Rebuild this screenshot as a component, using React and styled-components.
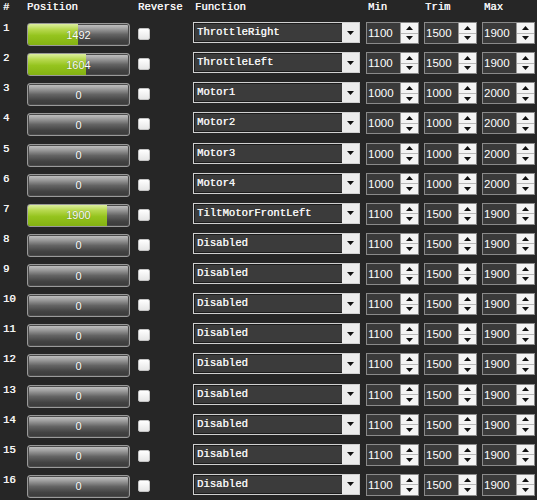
import React from 'react';
import styled, { createGlobalStyle } from 'styled-components';

const GlobalStyle = createGlobalStyle`
  html, body {
    margin: 0;
    padding: 0;
    background: #262626;
  }
  body {
    font-family: "Liberation Mono", monospace;
    color: #f2f2f2;
  }
`;

const COLS = '27px 111px 55px 173px 58px 58px 55px';

const Panel = styled.div`
  width: 537px;
  height: 500px;
  overflow: hidden;
  background: #262626;
`;

const HeaderRow = styled.div`
  display: grid;
  grid-template-columns: ${COLS};
  height: 22px;
  padding-top: 1px;
  box-sizing: border-box;
`;

const HeadCell = styled.div`
  font-family: "Liberation Mono", monospace;
  font-size: 10.6px;
  line-height: 13px;
  color: #f4f4f4;
  text-shadow: 0.3px 0 0 #f4f4f4;
  padding-left: ${p => p.$pad || 0}px;
`;

const Row = styled.div`
  display: grid;
  grid-template-columns: ${COLS};
  align-items: start;
  height: 30.13px;
`;

const RowNum = styled.div`
  font-family: "Liberation Mono", monospace;
  font-size: 10.6px;
  line-height: 12px;
  color: #f4f4f4;
  text-shadow: 0.3px 0 0 #f4f4f4;
  padding-left: 3px;
`;

const Bar = styled.div`
  position: relative;
  width: 103px;
  height: 23px;
  margin-top: 1px;
  box-sizing: border-box;
  border: 1px solid #9a9a9a;
  border-radius: 3px;
  overflow: hidden;
  background: linear-gradient(to bottom, #c8c8c8 0%, #a0a0a0 22%, #646464 50%, #434343 78%, #3a3a3a 100%);
  box-shadow: inset 0 0 0 1px #4a4a4a;
`;

const Fill = styled.div`
  position: absolute;
  left: 0;
  top: 0;
  bottom: 0;
  background: linear-gradient(to bottom, #dcee9f 0%, #b8d950 25%, #95c41e 55%, #84b212 100%);
`;

const BarLabel = styled.span`
  position: absolute;
  inset: 0;
  display: flex;
  align-items: center;
  justify-content: center;
  font-family: "Liberation Sans", Arial, sans-serif;
  font-size: 11px;
  color: #ffffff;
  text-shadow: 0 0 1px rgba(0, 0, 0, 0.5);
`;

const Check = styled.div`
  width: 12px;
  height: 12px;
  margin-top: 6px;
  border-radius: 2px;
  background: linear-gradient(to bottom, #ffffff, #e6e6e6);
  border: 1px solid #c4c4c4;
  box-sizing: border-box;
`;

const Select = styled.div`
  display: flex;
  width: 167px;
  height: 21px;
  box-sizing: border-box;
  border: 1px solid #d0d0d0;
  background: #3b3b3b;
  box-shadow: inset 0 0 0 1px #1c1c1c;
`;

const SelectText = styled.div`
  flex: 1;
  font-family: "Liberation Mono", monospace;
  font-size: 10.6px;
  line-height: 19px;
  padding-left: 3px;
  color: #f2f2f2;
  text-shadow: 0.3px 0 0 #f2f2f2;
  white-space: nowrap;
`;

const SelectButton = styled.div`
  width: 17px;
  display: flex;
  align-items: center;
  justify-content: center;
  background: #ececec;
`;

const Spin = styled.div`
  display: flex;
  width: 53px;
  height: 22px;
  box-sizing: border-box;
  border: 1px solid #8a8a8a;
  background: #3a3a3a;
`;

const SpinValue = styled.div`
  flex: 1;
  font-family: "Liberation Sans", Arial, sans-serif;
  font-size: 11.5px;
  line-height: 20px;
  padding-left: 1px;
  color: #ffffff;
`;

const SpinButtons = styled.div`
  width: 17px;
  display: flex;
  flex-direction: column;
  background: #f4f4f4;
  border-left: 1px solid #9a9a9a;
`;

const SpinHalf = styled.div`
  flex: 1;
  display: flex;
  align-items: center;
  justify-content: center;
  border-top: ${p => (p.$bottom ? '1px solid #b8b8b8' : 'none')};
`;

const Tri = ({ up }) => (
  <svg width="7" height="4" viewBox="0 0 7 4">
    <path d={up ? 'M0 4 L3.5 0 L7 4 Z' : 'M0 0 L7 0 L3.5 4 Z'} fill="#111" />
  </svg>
);

const SpinBox = ({ value }) => (
  <Spin>
    <SpinValue>{value}</SpinValue>
    <SpinButtons>
      <SpinHalf><Tri up /></SpinHalf>
      <SpinHalf $bottom><Tri /></SpinHalf>
    </SpinButtons>
  </Spin>
);

const channels = [
  { pos: 1492, fn: 'ThrottleRight', min: 1100, trim: 1500, max: 1900 },
  { pos: 1604, fn: 'ThrottleLeft', min: 1100, trim: 1500, max: 1900 },
  { pos: 0, fn: 'Motor1', min: 1000, trim: 1000, max: 2000 },
  { pos: 0, fn: 'Motor2', min: 1000, trim: 1000, max: 2000 },
  { pos: 0, fn: 'Motor3', min: 1000, trim: 1000, max: 2000 },
  { pos: 0, fn: 'Motor4', min: 1000, trim: 1000, max: 2000 },
  { pos: 1900, fn: 'TiltMotorFrontLeft', min: 1100, trim: 1500, max: 1900 },
];
for (let i = 8; i <= 16; i++) {
  channels.push({ pos: 0, fn: 'Disabled', min: 1100, trim: 1500, max: 1900 });
}

// servo range shown by the position bar
const fillPct = v => Math.max(0, Math.min(1, (v - 800) / 1400)) * 100;

export default function App() {
  return (
    <Panel>
      <GlobalStyle />
      <HeaderRow>
        <HeadCell $pad={3}>#</HeadCell>
        <HeadCell>Position</HeadCell>
        <HeadCell>Reverse</HeadCell>
        <HeadCell $pad={2}>Function</HeadCell>
        <HeadCell $pad={2}>Min</HeadCell>
        <HeadCell $pad={1}>Trim</HeadCell>
        <HeadCell $pad={2}>Max</HeadCell>
      </HeaderRow>
      {channels.map((c, i) => (
        <Row key={i}>
          <RowNum>{i + 1}</RowNum>
          <Bar>
            {c.pos > 0 && <Fill style={{ width: `${fillPct(c.pos)}%` }} />}
            <BarLabel>{c.pos}</BarLabel>
          </Bar>
          <Check />
          <Select>
            <SelectText>{c.fn}</SelectText>
            <SelectButton><Tri /></SelectButton>
          </Select>
          <SpinBox value={c.min} />
          <SpinBox value={c.trim} />
          <SpinBox value={c.max} />
        </Row>
      ))}
    </Panel>
  );
}
